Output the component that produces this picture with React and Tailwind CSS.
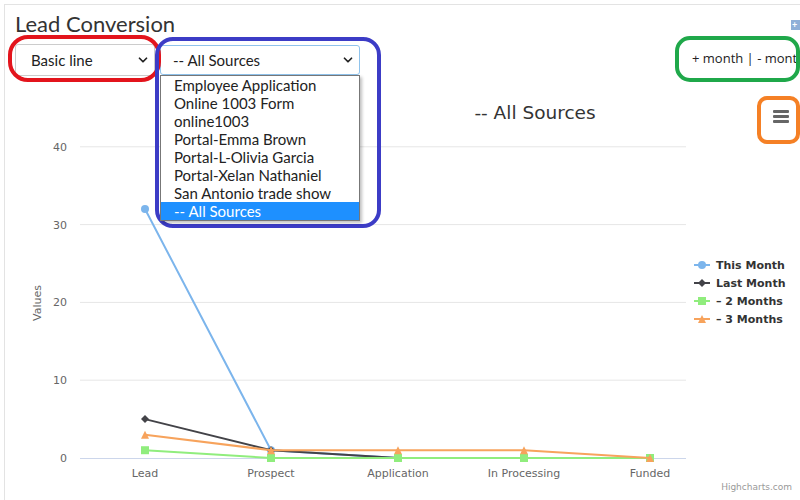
import { ChevronDown } from 'lucide-react';

const sources = [
    "Employee Application",
    "Online 1003 Form",
    "online1003",
    "Portal-Emma Brown",
    "Portal-L-Olivia Garcia",
    "Portal-Xelan Nathaniel",
    "San Antonio trade show",
    "-- All Sources"
];

const cats = ["Lead", "Prospect", "Application", "In Processing", "Funded"];
const xs = [145, 271, 398, 524, 650];
const yv = (v) => 458 - v * 7.78;

const series = [
    { name: "This Month", color: "#7cb5ec", data: [32, 1, 0, 0, 0], marker: "circle" },
    { name: "Last Month", color: "#434348", data: [5, 1, 0, 0, 0], marker: "diamond" },
    { name: "– 2 Months", color: "#90ed7d", data: [1, 0, 0, 0, 0], marker: "square" },
    { name: "– 3 Months", color: "#f7a35c", data: [3, 1, 1, 1, 0], marker: "triangle" }
];

const Marker = ({ type, x, y, color }) => {
    if (type === "circle") return <circle cx={x} cy={y} r="4" fill={color} />;
    if (type === "diamond") return <path d={`M${x} ${y - 4} L${x + 4} ${y} L${x} ${y + 4} L${x - 4} ${y} Z`} fill={color} />;
    if (type === "square") return <rect x={x - 4} y={y - 4} width="8" height="8" fill={color} />;
    return <path d={`M${x} ${y - 4} L${x + 4} ${y + 4} L${x - 4} ${y + 4} Z`} fill={color} />;
};

const Chart = () => {
    const font = "'DejaVu Sans', Verdana, sans-serif";
    return (
        <svg className="block" width="800" height="420" viewBox="0 80 800 420" style={{ fontFamily: font }}>
            <text x="535" y="119" textAnchor="middle" fontSize="18.5" fill="#333">-- All Sources</text>

            {/* hamburger */}
            <g fill="#666">
                <rect x="773" y="110" width="16" height="3" rx="1" />
                <rect x="773" y="115" width="16" height="3" rx="1" />
                <rect x="773" y="120" width="16" height="3" rx="1" />
            </g>

            {[40, 30, 20, 10].map((v) => (
                <line key={v} x1="80" x2="686" y1={yv(v)} y2={yv(v)} stroke="#e6e6e6" strokeWidth="1" />
            ))}
            <line x1="80" x2="686" y1="458.5" y2="458.5" stroke="#ccd6eb" strokeWidth="1" />

            {[40, 30, 20, 10, 0].map((v) => (
                <text key={v} x="67" y={yv(v) + 4} textAnchor="end" fontSize="11" fill="#666">{v}</text>
            ))}
            <text x="0" y="0" fontSize="11" fill="#666" textAnchor="middle" transform="translate(41 303) rotate(-90)">Values</text>

            {cats.map((c, i) => (
                <text key={c} x={xs[i]} y="477" textAnchor="middle" fontSize="11" fill="#666">{c}</text>
            ))}

            {series.map((s) => (
                <g key={s.name}>
                    <polyline
                        points={s.data.map((v, i) => `${xs[i]},${yv(v)}`).join(" ")}
                        fill="none"
                        stroke={s.color}
                        strokeWidth="2"
                        strokeLinejoin="round"
                    />
                    {s.data.map((v, i) => (
                        <Marker key={i} type={s.marker} x={xs[i]} y={yv(v)} color={s.color} />
                    ))}
                </g>
            ))}

            {series.map((s, i) => {
                const y = 265 + i * 18;
                return (
                    <g key={s.name}>
                        <line x1="694" x2="710" y1={y} y2={y} stroke={s.color} strokeWidth="2" />
                        <Marker type={s.marker} x={702} y={y} color={s.color} />
                        <text x="716" y={y + 4} fontSize="11" fontWeight="bold" fill="#333">{s.name}</text>
                    </g>
                );
            })}

            <text x="792" y="490" textAnchor="end" fontSize="9" fill="#999">Highcharts.com</text>
        </svg>
    );
};

const App = () => {
    return (
        <div className="relative w-[800px] h-[500px] overflow-hidden bg-white" style={{ fontFamily: "Lato, 'Open Sans', sans-serif" }}>
            <div className="ml-[4px] mt-[4px] h-[496px] border-l border-t border-[#e3e3e3]">
                <div className="pl-[10px] pt-[6px]">
                    <h1 className="text-[22px] leading-[26px] text-[#333]">Lead Conversion</h1>
                    <div className="mt-[7px] flex items-start">
                        <div className="w-[140px] h-[32px] flex items-center justify-between pl-[15px] pr-[4px] border border-[#ccc] rounded-[3px] text-[15px] text-[#222]">
                            <span>Basic line</span>
                            <ChevronDown size={14} strokeWidth={3} />
                        </div>
                        <div className="relative ml-[5px] mt-[1px] w-[200px]">
                            <div className="h-[30px] flex items-center justify-between pl-[12px] pr-[4px] border border-[#8fc3ec] rounded-[3px] text-[15px] text-[#222]">
                                <span>-- All Sources</span>
                                <ChevronDown size={14} strokeWidth={3} />
                            </div>
                            <ul className="absolute left-0 top-[30px] z-10 w-[200px] bg-white border border-[#777] shadow-[2px_2px_3px_rgba(0,0,0,0.25)] text-[15px] text-[#222]">
                                {sources.map((s, i) => (
                                    <li
                                        key={s}
                                        className={i === sources.length - 1 ? "h-[18px] leading-[18px] pl-[13px] bg-[#1e90ff] text-white" : "h-[18px] leading-[18px] pl-[13px]"}
                                    >
                                        {s}
                                    </li>
                                ))}
                            </ul>
                        </div>
                        <div className="flex-1" />
                        <div className="w-[108px] shrink-0 whitespace-nowrap pt-[5px] text-[13px] text-[#222]" style={{ fontFamily: "'Open Sans', sans-serif" }}>
                            + month | - month
                        </div>
                    </div>
                </div>
                <div className="absolute left-0 top-[80px]">
                    <Chart />
                </div>
            </div>

            {/* small plus badge */}
            <div className="absolute left-[791px] top-[20px] w-[10px] h-[10px] bg-[#8fb0d8] text-white text-[9px] leading-[10px] font-bold pl-[1px]">+</div>

            {/* annotation marks */}
            <div className="absolute left-[8px] top-[35px] w-[153px] h-[47px] border-[4px] border-[#e3141c] rounded-[20px] pointer-events-none" />
            <div className="absolute left-[155px] top-[37px] w-[226px] h-[191px] border-[4px] border-[#3c3cc6] rounded-[18px] pointer-events-none" />
            <div className="absolute left-[675px] top-[36px] w-[125px] h-[46px] border-[4px] border-[#1fa84a] rounded-[15px] pointer-events-none" />
            <div className="absolute left-[757px] top-[96px] w-[43px] h-[48px] border-[4px] border-[#f58025] rounded-[10px] pointer-events-none" />
        </div>
    );
};

export default App;
